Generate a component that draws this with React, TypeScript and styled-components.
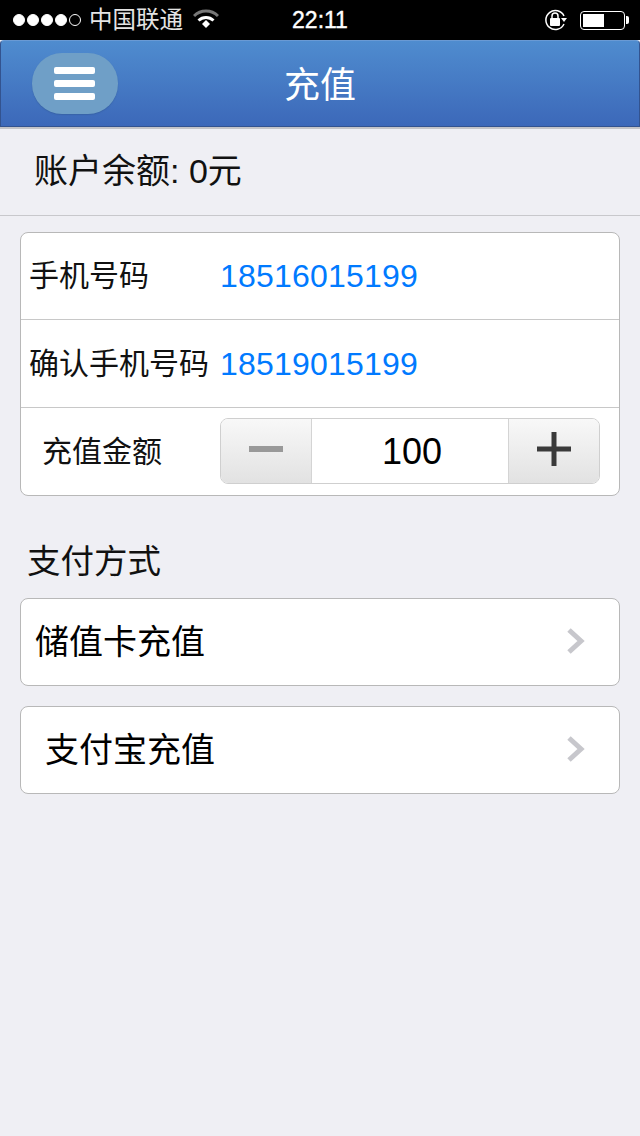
import React from 'react'
import styled, { createGlobalStyle } from 'styled-components'

const GlobalStyle = createGlobalStyle`
  html, body {
    margin: 0;
    padding: 0;
    background: #efeff4;
  }
  body {
    font-family: "Liberation Sans", "Noto Sans CJK SC", sans-serif;
  }
`

const Page = styled.div`
  width: 640px;
  height: 1136px;
  overflow: hidden;
  background: #efeff4;
  display: flex;
  flex-direction: column;
`

const StatusBar = styled.div`
  height: 40px;
  background: #000;
  color: #fff;
  display: grid;
  grid-template-columns: 1fr auto 1fr;
  align-items: center;
  padding: 0 12px;
  box-sizing: border-box;
`

const StatusLeft = styled.div`
  display: flex;
  align-items: center;
`

const StatusRight = styled.div`
  display: flex;
  align-items: center;
  justify-content: flex-end;
  gap: 12px;
  padding-right: 3px;
`

const Dot = styled.span<{ $empty?: boolean }>`
  width: 12px;
  height: 12px;
  box-sizing: border-box;
  border-radius: 50%;
  margin-right: 2px;
  background: ${({ $empty }) => ($empty ? 'transparent' : '#fff')};
  border: 1px solid #fff;
  &:first-child {
    margin-left: 1px;
  }
`

const Carrier = styled.span`
  font-size: 23.5px;
  color: #e4e4e4;
  margin-left: 6px;
  line-height: 40px;
`

const WifiIcon = styled.svg`
  margin-left: 10px;
  margin-top: -2px;
`

const Clock = styled.span`
  font-size: 23px;
  font-weight: 400;
  -webkit-text-stroke: 0.4px #fff;
  line-height: 40px;
`

const Battery = styled.div`
  width: 45px;
  height: 19px;
  box-sizing: border-box;
  border: 1px solid #fff;
  border-radius: 4px;
  padding: 2px;
  position: relative;
  &::after {
    content: '';
    position: absolute;
    right: -5px;
    top: 4px;
    width: 3px;
    height: 8px;
    background: #fff;
    border-radius: 0 2px 2px 0;
  }
`

const BatteryLevel = styled.div`
  width: 21px;
  height: 100%;
  background: #fff;
`

const NavBar = styled.div`
  height: 87px;
  box-sizing: border-box;
  background: linear-gradient(#4f8ccf, #3c68b9);
  border: 1px solid #33538f;
  border-top-color: #6a9ad4;
  border-radius: 4px 4px 0 0;
  position: relative;
  display: flex;
  align-items: center;
  justify-content: center;
`

const MenuButton = styled.button`
  position: absolute;
  left: 31px;
  top: 12px;
  width: 86px;
  height: 61px;
  padding: 0 2px 0 0;
  border: none;
  border-radius: 30px;
  background: #6f9fc7;
  box-shadow: 0 1px 1px rgba(50, 90, 150, 0.5);
  display: flex;
  flex-direction: column;
  align-items: center;
  justify-content: center;
  gap: 6px;
`

const MenuLine = styled.span`
  width: 41px;
  height: 7px;
  border-radius: 2px;
  background: #fff;
`

const NavTitle = styled.h1`
  margin: 0;
  padding-bottom: 4px;
  font-size: 36px;
  font-weight: 400;
  color: #fff;
`

const NavShadow = styled.div`
  height: 2px;
  background: #c4c4c8;
`

const BalanceRow = styled.div`
  height: 87px;
  box-sizing: border-box;
  border-bottom: 1px solid #c8c8cc;
  padding: 0 0 8px 34px;
  display: flex;
  align-items: center;
  font-size: 34px;
  color: #111;
`

const Content = styled.div`
  padding: 16px 20px 0;
`

const Card = styled.div`
  background: #fff;
  border: 1px solid #b8b8b8;
  border-radius: 8px;
  box-sizing: border-box;
`

const FormRow = styled.div`
  height: 86px;
  box-sizing: border-box;
  display: flex;
  align-items: center;
  & + & {
    height: 88px;
    border-top: 1px solid #c8c8c8;
  }
`

const FieldLabel = styled.span<{ $indent?: number }>`
  width: 199px;
  box-sizing: border-box;
  padding-left: ${({ $indent }) => $indent ?? 8}px;
  padding-bottom: 6px;
  font-size: 30px;
  color: #111;
  white-space: nowrap;
`

const PhoneValue = styled.span`
  font-size: 32px;
  letter-spacing: 0.2px;
  color: #007aff;
  ${FormRow} + ${FormRow} & {
    padding-top: 2px;
  }
`

const Stepper = styled.div`
  width: 380px;
  height: 66px;
  margin-top: -2px;
  box-sizing: border-box;
  border: 1px solid #cfcfcf;
  border-radius: 8px;
  display: flex;
  overflow: hidden;
`

const StepButton = styled.div`
  width: 90px;
  padding-bottom: 3px;
  box-sizing: border-box;
  background: linear-gradient(#f8f8f8, #e2e2e2);
  display: flex;
  align-items: center;
  justify-content: center;
`

const StepValue = styled.div`
  flex: 1;
  padding: 3px 0 0 4px;
  border-left: 1px solid #d4d4d4;
  border-right: 1px solid #d4d4d4;
  display: flex;
  align-items: center;
  justify-content: center;
  font-size: 36px;
  color: #000;
`

const SectionTitle = styled.div`
  font-size: 33.5px;
  color: #111;
  padding-left: 7px;
  margin-top: 45px;
  margin-bottom: 16px;
  line-height: 41px;
`

const LinkCard = styled(Card)<{ $indent: number }>`
  height: 88px;
  margin-bottom: 20px;
  display: flex;
  align-items: center;
  justify-content: space-between;
  padding: 0 33px 0 ${({ $indent }) => $indent}px;
  font-size: 34px;
  color: #000;
`

const LinkText = styled.span`
  padding-bottom: 6px;
`

const ChevronIcon = styled.svg`
  margin-bottom: 2px;
`

const Chevron = () => (
  <ChevronIcon width="20" height="28" viewBox="0 0 20 28">
    <path d="M3 3l12 11L3 25" fill="none" stroke="#c7c7cc" strokeWidth="5" />
  </ChevronIcon>
)

const App = () => (
  <Page>
    <GlobalStyle />
    <StatusBar>
      <StatusLeft>
        <Dot />
        <Dot />
        <Dot />
        <Dot />
        <Dot $empty />
        <Carrier>中国联通</Carrier>
        <WifiIcon width="26" height="20" viewBox="0 0 26 20">
          <path d="M1 7a17 17 0 0 1 24 0" fill="none" stroke="#777" strokeWidth="3" />
          <path d="M5.5 11.5a11 11 0 0 1 15 0" fill="none" stroke="#fff" strokeWidth="3" />
          <path d="M9 15l4-4 4 4-4 4z" fill="#fff" />
        </WifiIcon>
      </StatusLeft>
      <Clock>22:11</Clock>
      <StatusRight>
        <svg width="24" height="22" viewBox="0 0 24 22">
          <path d="M20 7A9.5 9.5 0 1 0 20 15" fill="none" stroke="#fff" strokeWidth="1.5" />
          <path d="M17 9h6l-3 4z" fill="#fff" />
          <rect x="6" y="9" width="10" height="8" rx="1" fill="#fff" />
          <path d="M8 9V7a3 3 0 0 1 6 0v2" fill="none" stroke="#fff" strokeWidth="1.5" />
        </svg>
        <Battery>
          <BatteryLevel />
        </Battery>
      </StatusRight>
    </StatusBar>
    <NavBar>
      <MenuButton aria-label="菜单">
        <MenuLine />
        <MenuLine />
        <MenuLine />
      </MenuButton>
      <NavTitle>充值</NavTitle>
    </NavBar>
    <NavShadow />
    <BalanceRow>账户余额: 0元</BalanceRow>
    <Content>
      <Card>
        <FormRow>
          <FieldLabel>手机号码</FieldLabel>
          <PhoneValue>18516015199</PhoneValue>
        </FormRow>
        <FormRow>
          <FieldLabel>确认手机号码</FieldLabel>
          <PhoneValue>18519015199</PhoneValue>
        </FormRow>
        <FormRow>
          <FieldLabel $indent={21}>充值金额</FieldLabel>
          <Stepper>
            <StepButton>
              <svg width="34" height="6" viewBox="0 0 34 6">
                <rect width="34" height="6" fill="#999" />
              </svg>
            </StepButton>
            <StepValue>100</StepValue>
            <StepButton>
              <svg width="34" height="34" viewBox="0 0 34 34">
                <path d="M0 14.5h34v5H0zM14.5 0h5v34h-5z" fill="#3a3a3a" />
              </svg>
            </StepButton>
          </Stepper>
        </FormRow>
      </Card>
      <SectionTitle>支付方式</SectionTitle>
      <LinkCard $indent={14}>
        <LinkText>储值卡充值</LinkText>
        <Chevron />
      </LinkCard>
      <LinkCard $indent={24}>
        <LinkText>支付宝充值</LinkText>
        <Chevron />
      </LinkCard>
    </Content>
  </Page>
)

export default App
